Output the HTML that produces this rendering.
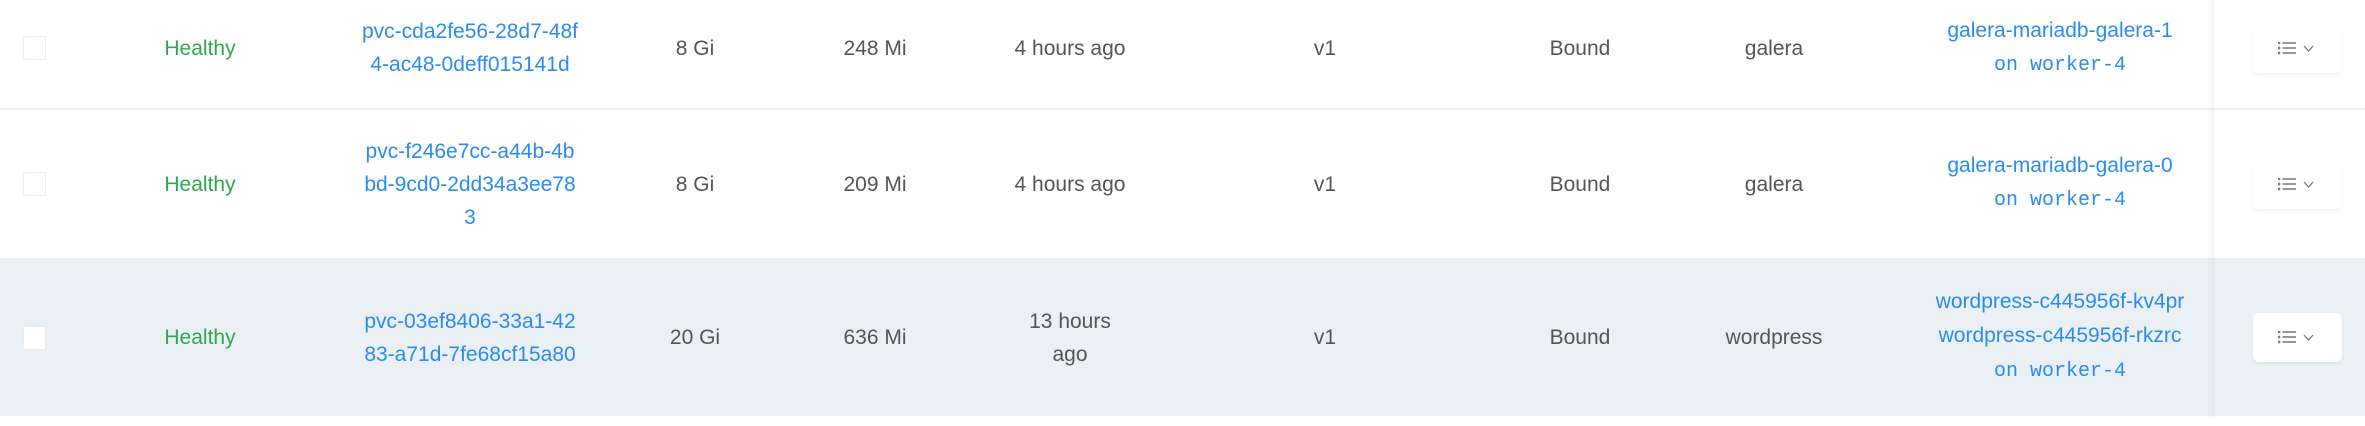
<!DOCTYPE html>
<html><head><meta charset="utf-8"><style>
html,body{margin:0;padding:0;}
body{width:2365px;height:426px;position:relative;overflow:hidden;background:#fff;font-family:"Liberation Sans",sans-serif;font-size:21px;color:#555;}
.t{position:absolute;width:400px;text-align:center;line-height:33px;white-space:nowrap;}
.g{color:#2fa84f}.b{color:#2a8cee}
.m{font-family:"Liberation Mono",monospace;font-size:20px;color:#2a8cee}
.cb{position:absolute;left:23px;width:21px;height:22px;border:1px solid #ebebeb;border-radius:3px;background:#fff}
.btn{position:absolute;left:2253px;width:89px;height:49px;background:#fff;border-radius:6px;box-shadow:0 2px 3px rgba(0,0,0,0.06)}
.sep{position:absolute;left:0;width:2365px;height:2px;background:#f0f0f0}
</style></head><body>
<div style="position:absolute;left:0;top:259px;width:2365px;height:157px;background:#eaf0f4"></div>
<div class="sep" style="top:108px"></div>
<div class="sep" style="top:258px;background:#e8edf0"></div>
<div style="position:absolute;left:2205px;top:0;width:10px;height:418px;background:linear-gradient(to right,rgba(0,0,0,0),rgba(0,0,0,0.035))"></div>

<div class="cb" style="top:36px"></div>
<div class="cb" style="top:172px"></div>
<div class="cb" style="top:326px"></div>

<!-- row1 -->
<div class="t g" style="left:0;top:32px">Healthy</div>
<div class="t b" style="left:270px;top:15px">pvc-cda2fe56-28d7-48f<br>4-ac48-0deff015141d</div>
<div class="t" style="left:495px;top:32px">8 Gi</div>
<div class="t" style="left:675px;top:32px">248 Mi</div>
<div class="t" style="left:870px;top:32px">4 hours ago</div>
<div class="t" style="left:1125px;top:32px">v1</div>
<div class="t" style="left:1380px;top:32px">Bound</div>
<div class="t" style="left:1574px;top:32px">galera</div>
<div class="t" style="left:1860px;top:14px"><span class="b">galera-mariadb-galera-1</span><br><span class="m">on worker-4</span></div>

<!-- row2 -->
<div class="t g" style="left:0;top:168px">Healthy</div>
<div class="t b" style="left:270px;top:135px">pvc-f246e7cc-a44b-4b<br>bd-9cd0-2dd34a3ee78<br>3</div>
<div class="t" style="left:495px;top:168px">8 Gi</div>
<div class="t" style="left:675px;top:168px">209 Mi</div>
<div class="t" style="left:870px;top:168px">4 hours ago</div>
<div class="t" style="left:1125px;top:168px">v1</div>
<div class="t" style="left:1380px;top:168px">Bound</div>
<div class="t" style="left:1574px;top:168px">galera</div>
<div class="t" style="left:1860px;top:149px"><span class="b">galera-mariadb-galera-0</span><br><span class="m">on worker-4</span></div>

<!-- row3 -->
<div class="t g" style="left:0;top:321px">Healthy</div>
<div class="t b" style="left:270px;top:305px">pvc-03ef8406-33a1-42<br>83-a71d-7fe68cf15a80</div>
<div class="t" style="left:495px;top:321px">20 Gi</div>
<div class="t" style="left:675px;top:321px">636 Mi</div>
<div class="t" style="left:870px;top:305px">13 hours<br>ago</div>
<div class="t" style="left:1125px;top:321px">v1</div>
<div class="t" style="left:1380px;top:321px">Bound</div>
<div class="t" style="left:1574px;top:321px">wordpress</div>
<div class="t" style="left:1860px;top:285px;line-height:34px"><span class="b">wordpress-c445956f-kv4pr</span><br><span class="b">wordpress-c445956f-rkzrc</span><br><span class="m">on worker-4</span></div>

<!-- buttons -->
<svg width="0" height="0" style="position:absolute"><defs><g id="ic" fill="none" stroke="#777" stroke-width="1.6"><circle cx="1" cy="1" r="0.6"/><circle cx="1" cy="6" r="0.6"/><circle cx="1" cy="11" r="0.6"/><path d="M4.5 1H18M4.5 6H18M4.5 11H18"/><path d="M26 4l4.5 5 4.5-5" stroke-width="1.3"/></g></defs></svg>
<div class="btn" style="top:24px"><svg style="position:absolute;left:25px;top:18px" width="40" height="14"><use href="#ic"/></svg></div>
<div class="btn" style="top:160px"><svg style="position:absolute;left:25px;top:18px" width="40" height="14"><use href="#ic"/></svg></div>
<div class="btn" style="top:313px"><svg style="position:absolute;left:25px;top:18px" width="40" height="14"><use href="#ic"/></svg></div>
</body></html>
